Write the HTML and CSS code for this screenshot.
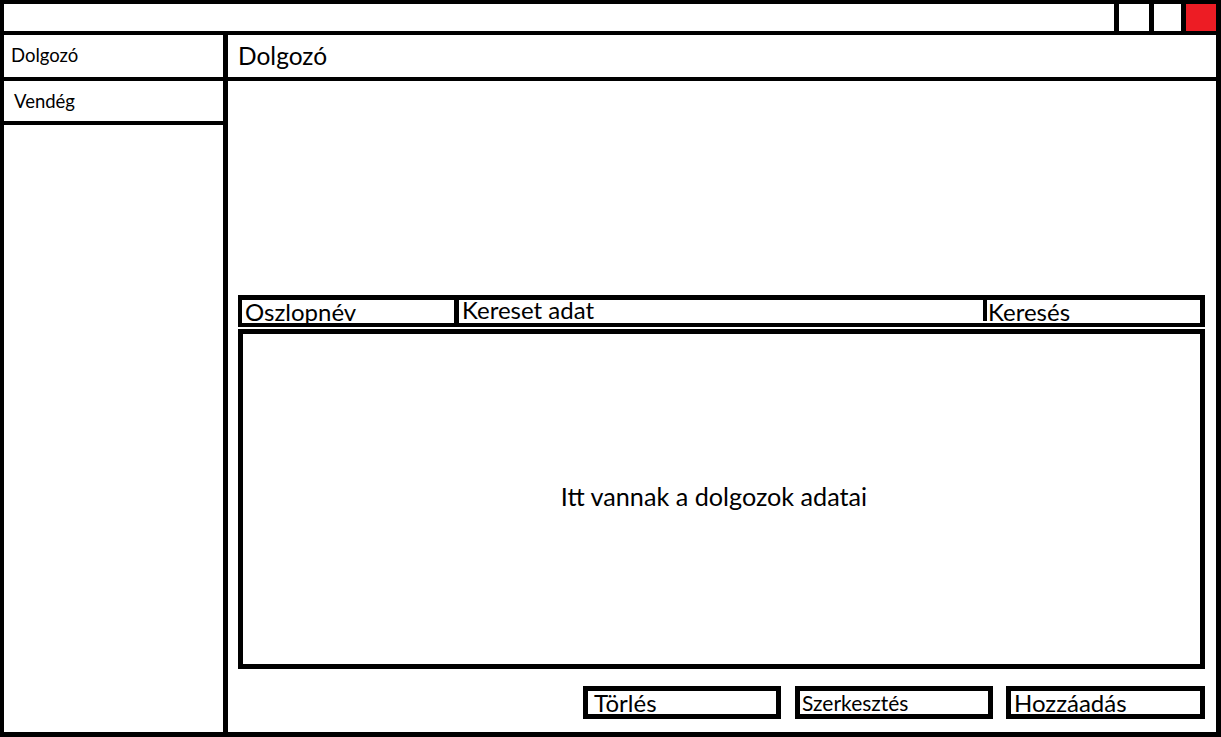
FILE: index.html
```html
<!DOCTYPE html>
<html lang="hu">
<head>
<meta charset="utf-8">
<title>Dolgozó</title>
<link rel="stylesheet" href="styles.css">
</head>
<body>
<div class="window">
  <div class="titlebar">
    <div class="title-space"></div>
    <div class="winbtn w1"></div>
    <div class="winbtn w2"></div>
    <div class="winbtn close"></div>
  </div>
  <div class="body">
    <nav class="sidebar">
      <div class="nav-item first">Dolgozó</div>
      <div class="nav-item second">Vendég</div>
    </nav>
    <main class="main">
      <div class="main-header">Dolgozó</div>
      <div class="content">
        <div class="search-row">
          <div class="cell col-name">Oszlopnév</div>
          <div class="cell col-value">Kereset adat</div>
          <div class="cell col-search">Keresés</div>
        </div>
        <div class="data-box">Itt vannak a dolgozok adatai</div>
        <div class="actions">
          <div class="btn btn-delete">Törlés</div>
          <div class="btn btn-edit">Szerkesztés</div>
          <div class="btn btn-add">Hozzáadás</div>
        </div>
      </div>
    </main>
  </div>
</div>
</body>
</html>
```

FILE: styles.css
```css
* { box-sizing: border-box; }
html, body { margin: 0; padding: 0; background: #fff; }
body { font-family: Lato, "Open Sans", sans-serif; color: #000; }

.window {
  width: 1221px;
  height: 737px;
  border-style: solid;
  border-color: #000;
  border-width: 4px 5px 5px 4px;
  display: flex;
  flex-direction: column;
}

.titlebar {
  height: 31px;
  border-bottom: 4px solid #000;
  display: flex;
  flex: none;
}
.title-space { flex: 1; }
.winbtn { border-left: 5px solid #000; height: 100%; }
.w1 { width: 35px; }
.w2 { width: 32px; }
.close { width: 35px; background: #ed1c24; }

.body { flex: 1; display: flex; min-height: 0; }

.sidebar {
  width: 224px;
  flex: none;
  border-right: 5px solid #000;
}
.nav-item {
  border-bottom: 4px solid #000;
  font-size: 18.5px;
  display: flex;
  align-items: center;
}
.nav-item.first { height: 46px; padding-left: 7px; padding-bottom: 3px; }
.nav-item.second { height: 44px; padding-left: 10px; }

.main { flex: 1; display: flex; flex-direction: column; }
.main-header {
  height: 46px;
  border-bottom: 4px solid #000;
  font-size: 24.5px;
  padding-left: 10px;
  display: flex;
  align-items: center;
  padding-bottom: 2px;
}

.content {
  flex: 1;
  padding: 214px 11px 0 10px;
  display: flex;
  flex-direction: column;
}

.search-row {
  height: 32px;
  border-style: solid;
  border-color: #000;
  border-width: 5px 5px 4px 4px;
  display: flex;
  font-size: 24px;
  line-height: 1;
}
.cell { height: 100%; overflow: visible; white-space: nowrap; }
.col-name { width: 217px; border-right: 5px solid #000; padding: 0 0 0 3px; }
.col-value { width: 528px; border-right: 4px solid #000; padding: 0 0 0 3px; margin-top: -2px; }
.col-search { flex: 1; padding: 0 0 0 1px; }

.data-box {
  margin-top: 2px;
  height: 340px;
  border: 5px solid #000;
  display: flex;
  align-items: center;
  justify-content: center;
  font-size: 25.2px;
  padding-right: 15px;
  padding-bottom: 7px;
}

.actions {
  margin-top: 17px;
  display: flex;
  justify-content: flex-end;
  gap: 13px;
}
.btn {
  width: 198px;
  height: 33px;
  border: 5px solid #000;
  font-size: 24px;
  line-height: 1;
  display: flex;
  align-items: center;
  white-space: nowrap;
}
.btn-delete { padding-left: 6px; margin-right: 1px; }
.btn-edit { font-size: 21px; padding-left: 2px; }
.btn-add { width: 199px; padding-left: 3px; }
```
